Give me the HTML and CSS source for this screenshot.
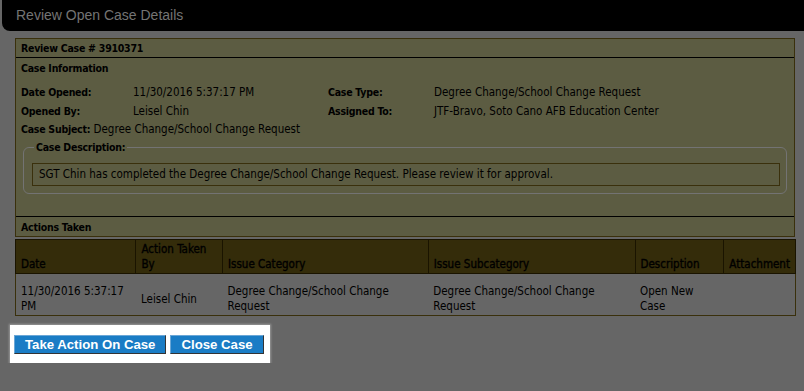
FILE: index.html
```html
<!DOCTYPE html>
<html lang="en">
<head>
    <meta charset="UTF-8">
    <title>Review Open Case Details</title>
    <link rel="stylesheet" href="styles.css">
</head>
<body>
    <div class="titlebar">Review Open Case Details</div>

    <div class="content">
        <div class="panel">
            <div class="panel-head">Review Case # 3910371</div>
            <div class="section-title">Case Information</div>
            <div class="info">
                <span class="lbl">Date Opened:</span>
                <span class="val">11/30/2016 5:37:17 PM</span>
                <span class="lbl">Case Type:</span>
                <span class="val">Degree Change/School Change Request</span>
                <span class="lbl">Opened By:</span>
                <span class="val">Leisel Chin</span>
                <span class="lbl">Assigned To:</span>
                <span class="val">JTF-Bravo, Soto Cano AFB Education Center</span>
            </div>
            <div class="subject"><span class="lbl">Case Subject:</span> Degree Change/School Change Request</div>
            <fieldset class="desc">
                <legend>Case Description:</legend>
                <div class="desc-box">SGT Chin has completed the Degree Change/School Change Request. Please review it for approval.</div>
            </fieldset>
            <div class="section-title actions">Actions Taken</div>
        </div>

        <table class="grid">
            <thead>
                <tr>
                    <th class="c1">Date</th>
                    <th class="c2">Action Taken By</th>
                    <th class="c3">Issue Category</th>
                    <th class="c4">Issue Subcategory</th>
                    <th class="c5">Description</th>
                    <th class="c6">Attachment</th>
                </tr>
            </thead>
            <tbody>
                <tr>
                    <td>11/30/2016 5:37:17 PM</td>
                    <td>Leisel Chin</td>
                    <td>Degree Change/School Change Request</td>
                    <td>Degree Change/School Change Request</td>
                    <td>Open New Case</td>
                    <td></td>
                </tr>
            </tbody>
        </table>

        <div class="btn-area">
            <button class="btn">Take Action On Case</button>
            <button class="btn">Close Case</button>
        </div>
    </div>
</body>
</html>
```

FILE: styles.css
```css
body {
    margin: 0;
    background: #666666;
    font-family: "DejaVu Sans Condensed", "DejaVu Sans", sans-serif;
    font-size: 11.5px;
    color: #000;
}
.titlebar {
    margin-left: 2px;
    height: 31px;
    line-height: 31px;
    padding-left: 14px;
    background: #000;
    border-bottom-left-radius: 8px;
    color: #747474;
    font-family: "Liberation Sans", sans-serif;
    font-size: 14px;
}
.content {
    padding: 7px 0 0 15px;
    width: 780px;
}
.panel {
    background: #5c5c42;
    border: 1px solid #3a300c;
}
.lbl,
.panel-head,
.section-title,
.desc legend {
    font-weight: bold;
    font-size: 10.5px;
    letter-spacing: -0.25px;
}
.panel-head {
    height: 18px;
    line-height: 19px;
    padding-left: 5px;
    border-bottom: 1px solid #000;
}
.section-title {
    height: 21px;
    line-height: 20px;
    padding-left: 5px;
}
.info {
    display: grid;
    grid-template-columns: 112px 195px 106px 1fr;
    grid-auto-rows: 19px;
    align-items: center;
    padding: 3px 0 0 5px;
}
.subject {
    height: 18px;
    line-height: 18px;
    padding-left: 5px;
}
.desc {
    margin: 3px 7px 0 7px;
    padding: 10px 6px 7px 8px;
    border: 1px solid #737373;
    border-radius: 6px;
}
.desc legend {
    padding: 0 2px;
    margin-left: 2px;
}
.desc-box {
    border: 1px solid #3a300c;
    height: 21px;
    line-height: 21px;
    padding-left: 6px;
}
.actions {
    margin-top: 22px;
    border-top: 1px solid #000;
    height: 19px;
}
.grid {
    width: 781px;
    margin-top: 2px;
    border-collapse: collapse;
    border: 1px solid #3a300c;
}
.grid th {
    background: #342c0a;
    border: 1px solid #1a1400;
    height: 31px;
    padding: 1px 5px;
    text-align: left;
    vertical-align: bottom;
    font-weight: normal;
    color: #000;
    -webkit-text-stroke: 0.35px #000;
    line-height: 15px;
}
.grid td {
    height: 32px;
    padding: 9px 5px 0 5px;
    line-height: 15px;
    vertical-align: middle;
}
.c1 { width: 110px; }
.c2 { width: 76px; }
.c3 { width: 196px; }
.c4 { width: 197px; }
.c5 { width: 78px; }
.btn-area {
    display: inline-flex;
    gap: 4px;
    margin: 9px 0 0 -5px;
    padding: 10px 6px 9px 4px;
    background: #fff;
    box-shadow: 0 0 2px 1px #999;
}
.btn {
    background: #1a7cc5;
    color: #fff;
    font-family: "Liberation Sans", Arial, sans-serif;
    font-weight: bold;
    font-size: 13.2px;
    height: 19px;
    line-height: 16px;
    padding: 0 10px;
    border: 1px solid;
    border-color: #6aa6d6 #333 #333 #6aa6d6;
    cursor: pointer;
}
```
